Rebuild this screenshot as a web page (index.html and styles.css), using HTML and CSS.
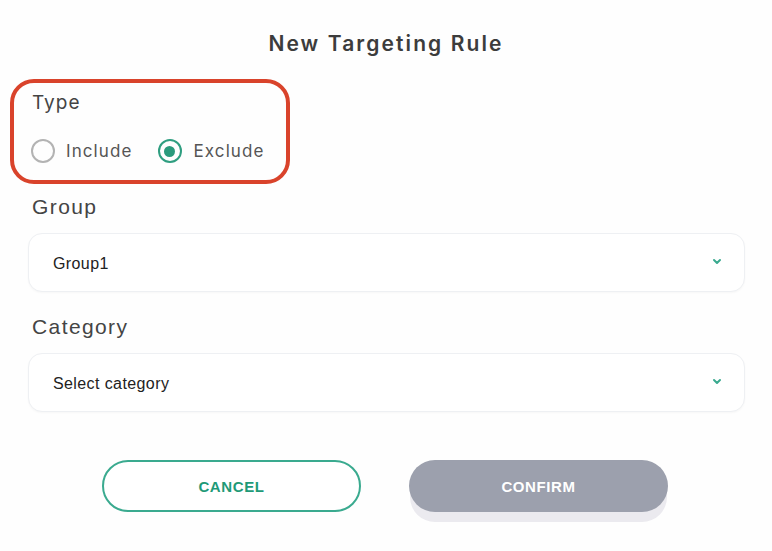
FILE: index.html
```html
<!DOCTYPE html>
<html>
<head>
<meta charset="utf-8">
<link rel="stylesheet" href="styles.css">
</head>
<body>
<div class="dialog">
  <h1 class="title">New Targeting Rule</h1>
  <div class="type-box">
    <div class="type-label">Type</div>
    <div class="radios">
      <label class="radio"><span class="circle"></span><span class="radio-text">Include</span></label>
      <label class="radio checked"><span class="circle"><span class="dot"></span></span><span class="radio-text">Exclude</span></label>
    </div>
  </div>
  <div class="field">
    <div class="field-label">Group</div>
    <div class="select">
      <span class="select-text">Group1</span>
      <svg class="chev" width="10" height="7" viewBox="0 0 10 7"><path d="M2 2 L5 5 L8 2" fill="none" stroke="#3aaa8f" stroke-width="2" stroke-linecap="round" stroke-linejoin="round"/></svg>
    </div>
  </div>
  <div class="field">
    <div class="field-label">Category</div>
    <div class="select">
      <span class="select-text">Select category</span>
      <svg class="chev" width="10" height="7" viewBox="0 0 10 7"><path d="M2 2 L5 5 L8 2" fill="none" stroke="#3aaa8f" stroke-width="2" stroke-linecap="round" stroke-linejoin="round"/></svg>
    </div>
  </div>
  <div class="actions">
    <button class="btn cancel">CANCEL</button>
    <button class="btn confirm">CONFIRM</button>
  </div>
</div>
</body>
</html>
```
FILE: styles.css
```css
html, body {
  margin: 0;
  padding: 0;
  background: #fefefe;
}
.dialog {
  width: 772px;
  height: 551px;
  font-family: "Inter", "Liberation Sans", sans-serif;
  color: #444;
  overflow: hidden;
}
.title {
  margin: 0;
  padding-top: 32px;
  height: 24px;
  line-height: 24px;
  text-align: center;
  font-size: 21px;
  font-weight: 600;
  letter-spacing: 2.1px;
  color: #3c3c3c;
}
.type-box {
  margin: 23px 0 0 10px;
  width: 254px;
  height: 97px;
  border: 4px solid #d9432b;
  border-radius: 24px;
  padding-left: 18px;
  box-sizing: content-box;
}
.type-label {
  margin-top: 9px;
  font-size: 19px;
  line-height: 22px;
  letter-spacing: 1px;
  color: #444;
}
.radios {
  display: flex;
  gap: 25px;
  margin-top: 25px;
  margin-left: -1px;
}
.radio {
  display: flex;
  align-items: center;
  gap: 11px;
  font-size: 17px;
  letter-spacing: 1.1px;
  color: #555;
}
.checked {
  gap: 12px;
}
.circle {
  width: 20px;
  height: 20px;
  border: 2px solid #b3b3b3;
  border-radius: 50%;
  display: flex;
  align-items: center;
  justify-content: center;
}
.checked .circle {
  border-color: #2f9e80;
}
.dot {
  width: 11px;
  height: 11px;
  border-radius: 50%;
  background: #2a9a7c;
}
.field {
  margin-left: 28px;
  width: 717px;
}
.field-label {
  margin-left: 4px;
  font-family: "Liberation Sans", sans-serif;
  font-size: 21px;
  line-height: 24px;
  color: #444;
  letter-spacing: 1.4px;
}
.type-box + .field { margin-top: 11px; }
.field + .field { margin-top: 23px; }
.select {
  margin-top: 14px;
  height: 57px;
  border: 1px solid #eef0f3;
  border-radius: 14px;
  box-shadow: 0 1px 2px rgba(0,0,0,0.03);
  display: flex;
  align-items: center;
  justify-content: space-between;
  padding: 0 24px;
  background: #fff;
}
.select-text {
  font-family: "Liberation Sans", sans-serif;
  font-size: 16px;
  letter-spacing: 0.4px;
  color: #222;
  margin-top: 3px;
}
.chev {
  margin-top: -2px;
  margin-right: -2px;
}
.actions {
  display: flex;
  gap: 48px;
  margin: 48px 0 0 102px;
}
.btn {
  width: 259px;
  height: 52px;
  border-radius: 26px;
  font-family: "Liberation Sans", sans-serif;
  font-weight: 700;
  font-size: 15px;
  letter-spacing: 0.6px;
  cursor: pointer;
}
.cancel {
  background: #fff;
  border: 2px solid #3aaa8f;
  color: #1f9a78;
}
.confirm {
  border: none;
  background: #9ca0ad;
  color: #fff;
  box-shadow: 0 11px 0 -1px #ebeaef;
}
```
